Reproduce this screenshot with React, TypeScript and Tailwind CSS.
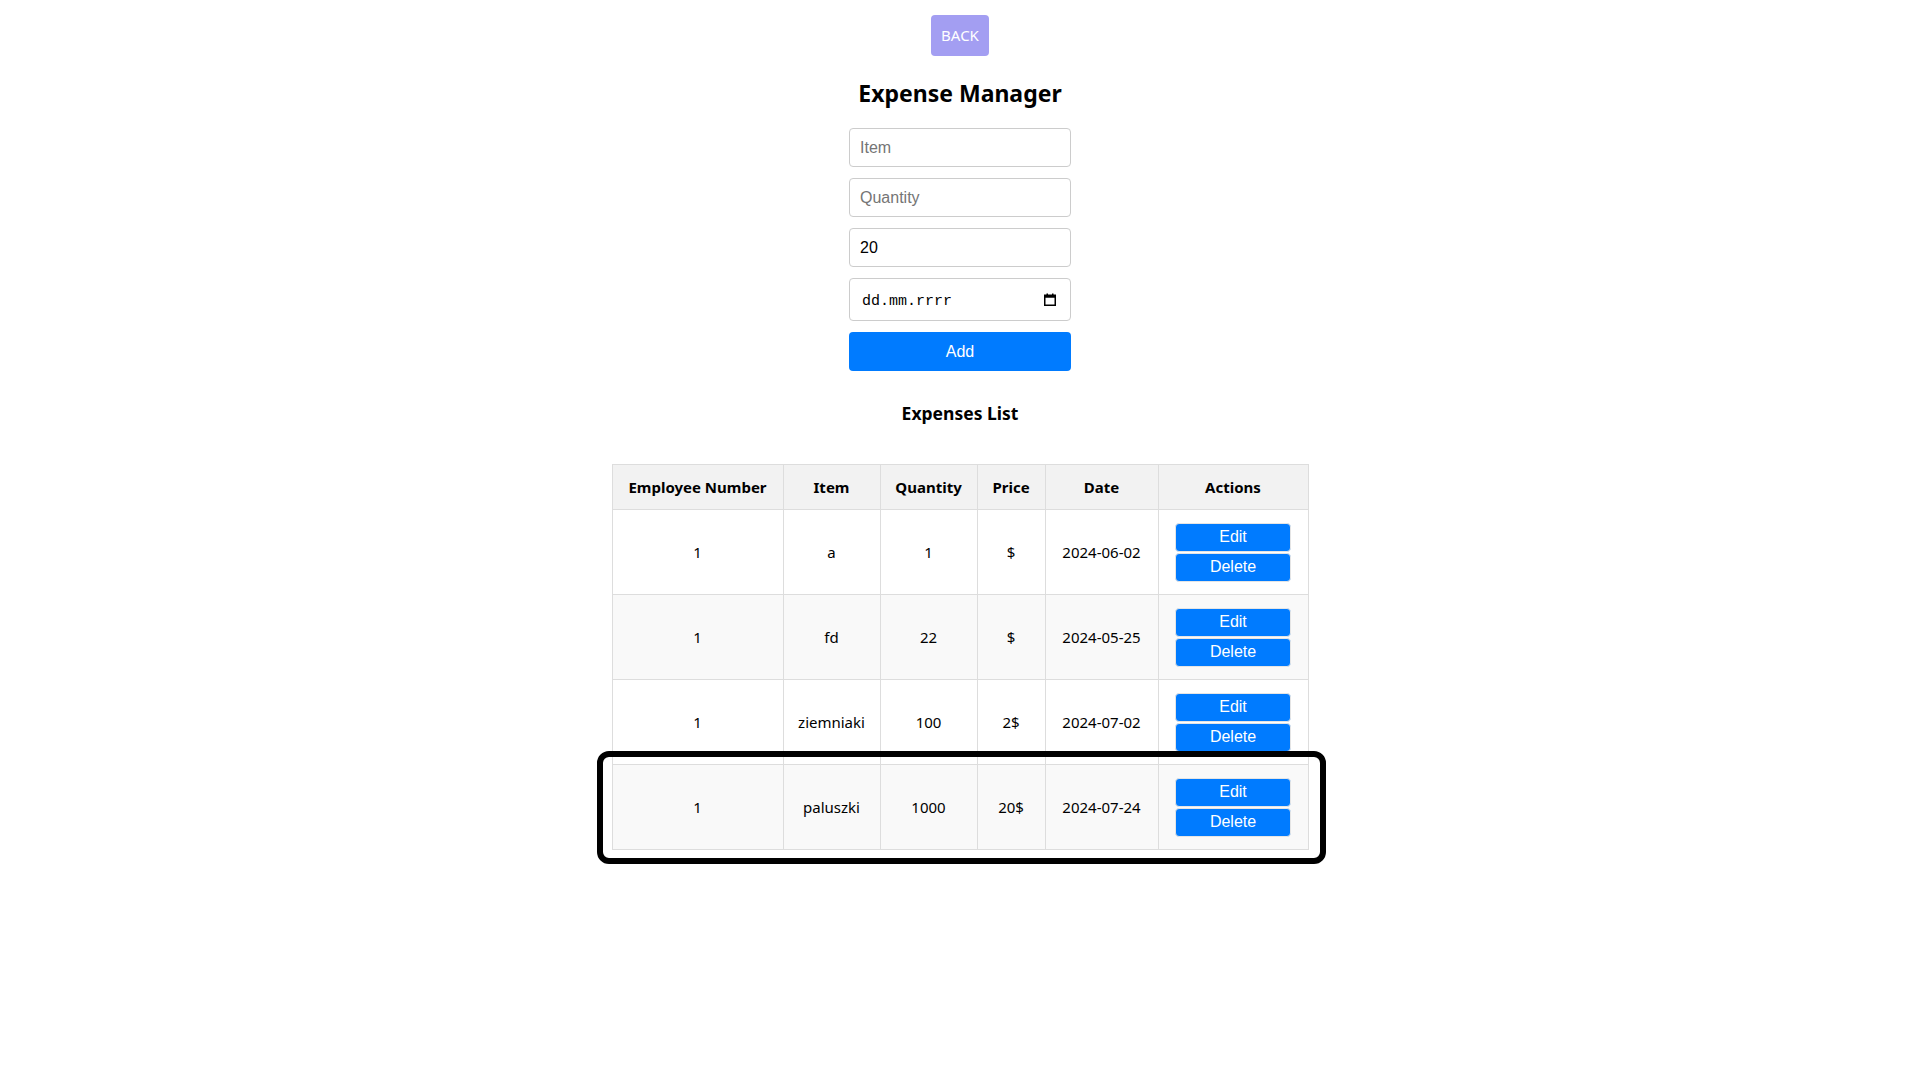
import React from "react";

// ===== Shared classes =====
const STYLES = {
  input:
    "w-[222px] h-[39px] px-[10px] border border-[#cccccc] rounded-[4px] text-[16px] text-black placeholder:text-[#757575] outline-none font-['Liberation_Sans',Arial,sans-serif]",
  th: "border border-[#dddddd] px-2 py-3 text-center font-bold text-[15px] leading-[20px] whitespace-nowrap",
  td: "border border-[#dddddd] px-2 py-3 text-center text-[15px] leading-[20px] whitespace-nowrap",
  actionButton:
    "block w-[116px] h-[29px] bg-[#007bff] text-white text-[16px] rounded-[4px] border border-[#e5e5e5]",
};

interface Expense {
  employee: number;
  item: string;
  quantity: number;
  price: string;
  date: string;
}

const EXPENSES: Expense[] = [
  { employee: 1, item: "a", quantity: 1, price: "$", date: "2024-06-02" },
  { employee: 1, item: "fd", quantity: 22, price: "$", date: "2024-05-25" },
  { employee: 1, item: "ziemniaki", quantity: 100, price: "2$", date: "2024-07-02" },
  { employee: 1, item: "paluszki", quantity: 1000, price: "20$", date: "2024-07-24" },
];

function CalendarIcon() {
  return (
    <svg width="12" height="13" viewBox="0 0 12 13" fill="none">
      <rect x="0.75" y="2.25" width="10.5" height="10" stroke="black" strokeWidth="1.5" />
      <rect x="0.75" y="2.25" width="10.5" height="2.5" fill="black" />
      <rect x="2.5" y="0.5" width="1.5" height="2.5" fill="black" />
      <rect x="8" y="0.5" width="1.5" height="2.5" fill="black" />
    </svg>
  );
}

// Form at the top of the page
function ExpenseForm() {
  return (
    <div className="flex flex-col gap-[11px] items-center">
      <input className={STYLES.input} placeholder="Item" />
      <input className={STYLES.input} placeholder="Quantity" />
      <input className={STYLES.input} defaultValue="20" />
      <div className="w-[222px] h-[43px] pl-[12px] pr-[14px] border border-[#cccccc] rounded-[4px] flex items-center justify-between">
        <span className="mt-[4px] font-['Liberation_Mono',monospace] text-[15px] leading-none text-black">dd.mm.rrrr</span>
        <CalendarIcon />
      </div>
      <button className="w-[222px] h-[39px] bg-[#007bff] text-white text-[16px] rounded-[4px] font-['Liberation_Sans',Arial,sans-serif]">
        Add
      </button>
    </div>
  );
}

// Expenses table
function ExpensesTable({ expenses }: { expenses: Expense[] }) {
  return (
    <div className="relative">
      <table className="border-collapse table-fixed w-[696px]">
        <thead>
          <tr className="bg-[#f2f2f2]">
            <th className={`${STYLES.th} w-[171px]`}>Employee Number</th>
            <th className={`${STYLES.th} w-[97px]`}>Item</th>
            <th className={`${STYLES.th} w-[97px]`}>Quantity</th>
            <th className={`${STYLES.th} w-[68px]`}>Price</th>
            <th className={`${STYLES.th} w-[113px]`}>Date</th>
            <th className={`${STYLES.th} w-[150px]`}>Actions</th>
          </tr>
        </thead>
        <tbody>
          {expenses.map((e, idx) => (
            <tr key={idx} className={`h-[85px] ${idx % 2 === 1 ? "bg-[#f9f9f9]" : "bg-white"}`}>
              <td className={STYLES.td}>{e.employee}</td>
              <td className={STYLES.td}>{e.item}</td>
              <td className={STYLES.td}>{e.quantity}</td>
              <td className={STYLES.td}>{e.price}</td>
              <td className={STYLES.td}>{e.date}</td>
              <td className={STYLES.td}>
                <div className="flex flex-col items-center gap-px font-['Liberation_Sans',Arial,sans-serif]">
                  <button className={STYLES.actionButton}>Edit</button>
                  <button className={STYLES.actionButton}>Delete</button>
                </div>
              </td>
            </tr>
          ))}
        </tbody>
      </table>
      {/* highlight around the last row */}
      <div className="absolute left-[-15px] right-[-17px] bottom-[-14px] h-[113px] border-[6px] border-black rounded-[12px] pointer-events-none" />
    </div>
  );
}

export default function App() {
  return (
    <div className="min-h-screen bg-white text-black font-['Noto_Sans','Open_Sans',sans-serif] flex flex-col items-center pt-[15px]">
      <button className="h-[41px] px-[10px] bg-[#a39ef2] text-white text-[15px] rounded-[4px]">BACK</button>
      <h1 className="mt-[21px] mb-[19px] text-[23px] leading-[32px] font-bold">Expense Manager</h1>
      <ExpenseForm />
      <h2 className="mt-[29px] mb-[38px] text-[17.5px] leading-[26px] font-bold">Expenses List</h2>
      <ExpensesTable expenses={EXPENSES} />
    </div>
  );
}
